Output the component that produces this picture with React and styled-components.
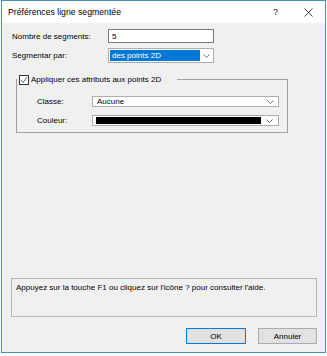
import React from "react";
import styled, { createGlobalStyle } from "styled-components";

const Global = createGlobalStyle`
  html, body { margin: 0; padding: 0; background: #ffffff; }
  body { font-family: "Liberation Sans", Arial, sans-serif; color: #000; }
  * { box-sizing: border-box; }
`;

const Window = styled.div`
  margin-left: 1px;
  width: 325px;
  height: 353px;
  border: 1px solid #4a8bc9;
  background: #f0f0f0;
  display: flex;
  flex-direction: column;
`;

const TitleBar = styled.div`
  height: 22px;
  background: #ffffff;
  display: flex;
  align-items: center;
  padding-left: 6px;
  font-size: 8.7px;
`;

const TitleText = styled.span`
  flex: 1;
`;

const TitleButton = styled.div`
  width: ${(p) => p.$w}px;
  height: 22px;
  display: flex;
  align-items: center;
  justify-content: center;
  font-size: 9px;
  color: #222;
`;

const Content = styled.div`
  flex: 1;
  display: flex;
  flex-direction: column;
  padding: 6px 8px 8px 10px;
  font-size: 8px;
`;

const Row = styled.div`
  display: flex;
  align-items: center;
  margin-top: ${(p) => p.$mt || 0}px;
`;

const Label = styled.div`
  width: ${(p) => p.$w}px;
  white-space: nowrap;
`;

const TextInput = styled.div`
  width: 106px;
  height: 14px;
  background: #fff;
  border: 1px solid #7a7a7a;
  display: flex;
  align-items: center;
  padding-left: 3px;
`;

const Select = styled.div`
  width: ${(p) => p.$w}px;
  height: ${(p) => p.$h}px;
  background: #fff;
  border: 1px solid #adadad;
  display: flex;
  align-items: center;
  padding: 1px 0 1px ${(p) => p.$pl || 1}px;
`;

const SelectValue = styled.div`
  flex: 1;
  height: 100%;
  display: flex;
  align-items: center;
  padding-left: 2px;
  background: ${(p) => (p.$selected ? "#0078d7" : "transparent")};
  color: ${(p) => (p.$selected ? "#fff" : "#000")};
`;

const Swatch = styled.div`
  flex: 1;
  height: 7px;
  background: #000;
`;

const Chevron = styled.div`
  width: ${(p) => p.$w}px;
  display: flex;
  justify-content: center;
  align-items: center;
`;

const Group = styled.fieldset`
  margin: 11px 0 0 4px;
  width: 272px;
  padding: 0 0 6px 0;
  border: 1px solid #a0a0a0;
  min-width: 0;
`;

const Legend = styled.legend`
  padding: 0 16px 0 2px;
  display: flex;
  align-items: center;
  gap: 2px;
  height: 11px;
`;

const GroupBody = styled.div`
  padding: 0 8px 0 20px;
`;

const CheckBox = styled.div`
  width: 10px;
  height: 10px;
  border: 1px solid #333;
  background: #fff;
  display: flex;
  align-items: center;
  justify-content: center;
`;

const Spacer = styled.div`
  flex: 1;
`;

const HelpBox = styled.div`
  margin-left: -1px;
  height: 39px;
  border: 1px solid #b9b9b9;
  padding: 4px 4px;
  line-height: 10px;
`;

const Buttons = styled.div`
  margin-top: 11px;
  display: flex;
  justify-content: flex-end;
  gap: 12px;
`;

const Button = styled.div`
  width: ${(p) => p.$w}px;
  height: 16px;
  background: #e1e1e1;
  border: 1px solid ${(p) => (p.$primary ? "#0078d7" : "#adadad")};
  display: flex;
  align-items: center;
  justify-content: center;
`;

const ChevronIcon = () => (
  <svg width="7" height="4" viewBox="0 0 7 4">
    <path d="M0.5 0.5 L3.5 3.5 L6.5 0.5" fill="none" stroke="#666" strokeWidth="0.9" />
  </svg>
);

export default function App() {
  return (
    <>
      <Global />
      <Window>
        <TitleBar>
          <TitleText>Préférences ligne segmentée</TitleText>
          <TitleButton $w={31}>?</TitleButton>
          <TitleButton $w={34}>
            <svg width="9" height="9" viewBox="0 0 9 9">
              <path d="M0.5 0.5 L8.5 8.5 M8.5 0.5 L0.5 8.5" stroke="#333" strokeWidth="0.9" />
            </svg>
          </TitleButton>
        </TitleBar>
        <Content>
          <Row>
            <Label $w={96}>Nombre de segments:</Label>
            <TextInput>5</TextInput>
          </Row>
          <Row $mt={5}>
            <Label $w={96}>Segmentar par:</Label>
            <Select $w={106} $h={15} $pl={1}>
              <SelectValue $selected>des points 2D</SelectValue>
              <Chevron $w={13}>
                <ChevronIcon />
              </Chevron>
            </Select>
          </Row>
          <Group>
            <Legend>
              <CheckBox>
                <svg width="8" height="8" viewBox="0 0 8 8">
                  <path d="M1 4 L3 6.5 L7.2 1" fill="none" stroke="#555" strokeWidth="0.9" />
                </svg>
              </CheckBox>
              <span>Appliquer ces attributs aux points 2D</span>
            </Legend>
            <GroupBody>
              <Row $mt={11}>
                <Label $w={55}>Classe:</Label>
                <Select $w={187} $h={11} $pl={2}>
                  <SelectValue>Aucune</SelectValue>
                  <Chevron $w={15}>
                    <ChevronIcon />
                  </Chevron>
                </Select>
              </Row>
              <Row $mt={8}>
                <Label $w={55}>Couleur:</Label>
                <Select $w={187} $h={11} $pl={3}>
                  <Swatch />
                  <Chevron $w={17}>
                    <ChevronIcon />
                  </Chevron>
                </Select>
              </Row>
            </GroupBody>
          </Group>
          <Spacer />
          <HelpBox>Appuyez sur la touche F1 ou cliquez sur l'icône ? pour consulter l'aide.</HelpBox>
          <Buttons>
            <Button $w={60} $primary>OK</Button>
            <Button $w={59}>Annuler</Button>
          </Buttons>
        </Content>
      </Window>
    </>
  );
}
